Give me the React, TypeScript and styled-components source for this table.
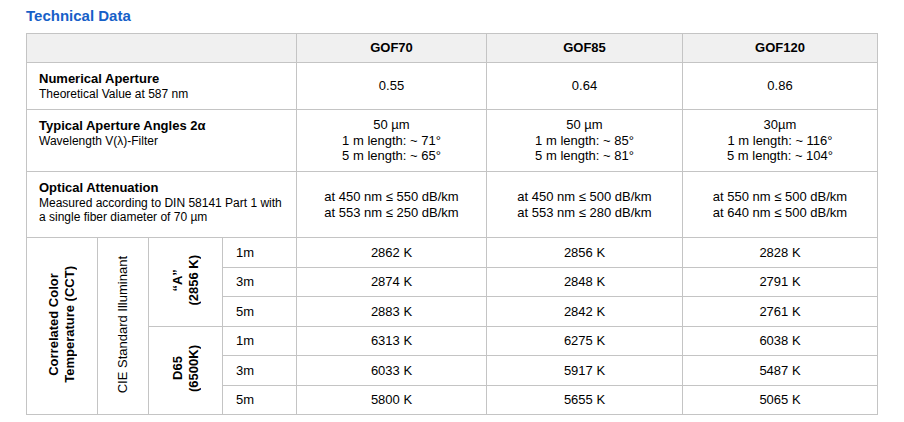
import React from 'react'
import styled, { createGlobalStyle } from 'styled-components'

const GlobalStyle = createGlobalStyle`
    body {
        margin: 0;
        background: #ffffff;
        font-family: "Liberation Sans", Arial, sans-serif;
        color: #000000;
    }
`

const Page = styled.div`
    padding: 6px 26px 0 26px;
    width: 851px;
`

const Title = styled.h2`
    margin: 0 0 8px 0;
    font-size: 15px;
    line-height: 19px;
    font-weight: bold;
    color: #1660c8;
`

const Table = styled.table`
    width: 851px;
    border-collapse: collapse;
    table-layout: fixed;
    font-size: 13px;
    line-height: 15.5px;
    border: 1px solid #c4c4c4;
`

const Head = styled.th`
    height: 28px;
    padding: 0;
    background: #f0f0f0;
    border: 1px solid #c4c4c4;
    font-size: 13px;
    font-weight: bold;
    text-align: center;
    vertical-align: middle;
`

const Label = styled.td<{ $height: number }>`
    height: ${p => p.$height}px;
    padding: 9px 12px 0 12px;
    border: 1px solid #c4c4c4;
    vertical-align: top;
    text-align: left;
    box-sizing: border-box;
    font-size: 12px;
    line-height: 14.5px;
`

const LabelTitle = styled.div`
    font-size: 13px;
    font-weight: bold;
`

const Value = styled.td`
    padding: 0;
    border: 1px solid #c4c4c4;
    text-align: center;
    vertical-align: middle;
`

const SideCell = styled.td<{ $bold?: boolean }>`
    padding: 0;
    border: 1px solid #c4c4c4;
    text-align: center;
    vertical-align: middle;
    font-size: 13px;
    font-weight: ${p => (p.$bold ? 'bold' : 'normal')};
`

const Vertical = styled.div`
    display: inline-block;
    writing-mode: vertical-rl;
    transform: rotate(180deg);
    line-height: 16px;
    white-space: nowrap;
`

const LengthCell = styled.td`
    height: 28.5px;
    padding: 0 0 0 13px;
    border: 1px solid #c4c4c4;
    vertical-align: middle;
`

type CctRow = { length: string; values: string[] }

const models = ['GOF70', 'GOF85', 'GOF120']

const illuminantA: CctRow[] = [
    { length: '1m', values: ['2862 K', '2856 K', '2828 K'] },
    { length: '3m', values: ['2874 K', '2848 K', '2791 K'] },
    { length: '5m', values: ['2883 K', '2842 K', '2761 K'] },
]

const illuminantD65: CctRow[] = [
    { length: '1m', values: ['6313 K', '6275 K', '6038 K'] },
    { length: '3m', values: ['6033 K', '5917 K', '5487 K'] },
    { length: '5m', values: ['5800 K', '5655 K', '5065 K'] },
]

const angles = [
    ['50 µm', '1 m length: ~ 71°', '5 m length: ~ 65°'],
    ['50 µm', '1 m length: ~ 85°', '5 m length: ~ 81°'],
    ['30µm', '1 m length: ~ 116°', '5 m length: ~ 104°'],
]

const attenuation = [
    ['at 450 nm ≤ 550 dB/km', 'at 553 nm ≤ 250 dB/km'],
    ['at 450 nm ≤ 500 dB/km', 'at 553 nm ≤ 280 dB/km'],
    ['at 550 nm ≤ 500 dB/km', 'at 640 nm ≤ 500 dB/km'],
]

const Lines = ({ lines }: { lines: string[] }) => (
    <>
        {lines.map((line, i) => (
            <div key={i}>{line}</div>
        ))}
    </>
)

const App = () => {
    return (
        <>
            <GlobalStyle />
            <Page>
                <Title>Technical Data</Title>
                <Table>
                    <colgroup>
                        <col style={{ width: 71 }} />
                        <col style={{ width: 51 }} />
                        <col style={{ width: 74 }} />
                        <col style={{ width: 74 }} />
                        <col style={{ width: 190 }} />
                        <col style={{ width: 196 }} />
                        <col style={{ width: 195 }} />
                    </colgroup>
                    <thead>
                        <tr>
                            <Head colSpan={4} />
                            {models.map(m => (
                                <Head key={m}>{m}</Head>
                            ))}
                        </tr>
                    </thead>
                    <tbody>
                        <tr>
                            <Label colSpan={4} $height={47}>
                                <LabelTitle>Numerical Aperture</LabelTitle>
                                Theoretical Value at 587 nm
                            </Label>
                            <Value>0.55</Value>
                            <Value>0.64</Value>
                            <Value>0.86</Value>
                        </tr>
                        <tr>
                            <Label colSpan={4} $height={62}>
                                <LabelTitle>Typical Aperture Angles 2α</LabelTitle>
                                Wavelength V(λ)-Filter
                            </Label>
                            {angles.map((a, i) => (
                                <Value key={i}>
                                    <Lines lines={a} />
                                </Value>
                            ))}
                        </tr>
                        <tr>
                            <Label colSpan={4} $height={66}>
                                <LabelTitle>Optical Attenuation</LabelTitle>
                                Measured according to DIN 58141 Part 1 with a single fiber diameter of 70 µm
                            </Label>
                            {attenuation.map((a, i) => (
                                <Value key={i}>
                                    <Lines lines={a} />
                                </Value>
                            ))}
                        </tr>
                        {illuminantA.map((row, i) => (
                            <tr key={'a' + row.length}>
                                {i === 0 && (
                                    <>
                                        <SideCell rowSpan={6} $bold>
                                            <Vertical>
                                                Correlated Color
                                                <br />
                                                Temperature (CCT)
                                            </Vertical>
                                        </SideCell>
                                        <SideCell rowSpan={6}>
                                            <Vertical>CIE Standard Illuminant</Vertical>
                                        </SideCell>
                                        <SideCell rowSpan={3} $bold>
                                            <Vertical>
                                                “A”
                                                <br />
                                                (2856 K)
                                            </Vertical>
                                        </SideCell>
                                    </>
                                )}
                                <LengthCell>{row.length}</LengthCell>
                                {row.values.map((v, j) => (
                                    <Value key={j}>{v}</Value>
                                ))}
                            </tr>
                        ))}
                        {illuminantD65.map((row, i) => (
                            <tr key={'d' + row.length}>
                                {i === 0 && (
                                    <SideCell rowSpan={3} $bold>
                                        <Vertical>
                                            D65
                                            <br />
                                            (6500K)
                                        </Vertical>
                                    </SideCell>
                                )}
                                <LengthCell>{row.length}</LengthCell>
                                {row.values.map((v, j) => (
                                    <Value key={j}>{v}</Value>
                                ))}
                            </tr>
                        ))}
                    </tbody>
                </Table>
            </Page>
        </>
    )
}

export default App
